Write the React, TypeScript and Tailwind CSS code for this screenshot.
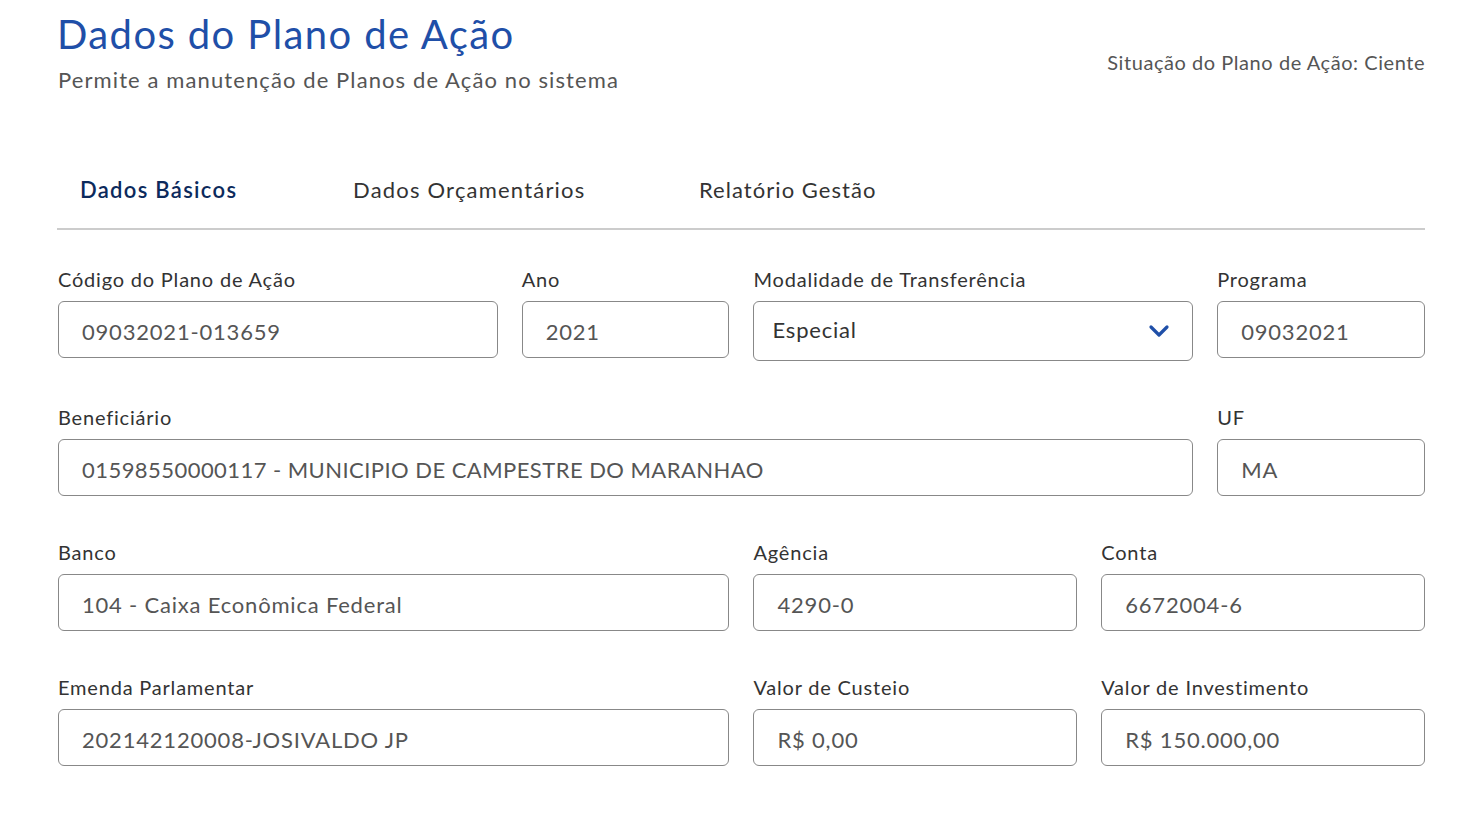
import React from "react";

const font = { fontFamily: "Lato, 'Open Sans', sans-serif" };

function Field({
  label,
  value,
  span,
  tracking = "tracking-[0.8px]",
}: {
  label: string;
  value: string;
  span: string;
  tracking?: string;
}) {
  return (
    <div className={`${span} flex flex-col`}>
      <label className="text-[20px] leading-[24px] tracking-[0.8px] text-[#333333] mb-[10px]">{label}</label>
      <div className={`h-[57px] rounded-[6px] border border-[#888888] flex items-center pl-[23px] pt-[3px] text-[22px] ${tracking} text-[#555555]`}>
        {value}
      </div>
    </div>
  );
}

export default function App() {
  return (
    <div className="min-h-screen bg-white" style={font}>
      <div className="ml-[58px] w-[1367px]">
        <div className="flex justify-between items-start">
          <div>
            <h1 className="text-[40px] leading-[48px] tracking-[1.4px] text-[#1f4fa8] pt-[10px] -ml-[1px]">Dados do Plano de Ação</h1>
            <p className="text-[22px] leading-[28px] tracking-[1.1px] text-[#555555] mt-[8px]">Permite a manutenção de Planos de Ação no sistema</p>
          </div>
          <div className="text-[20px] tracking-[0.55px] text-[#555555] mt-[47px]">Situação do Plano de Ação: Ciente</div>
        </div>

        <div className="mt-[78px] border-b-2 border-[#cccccc] flex h-[58px] items-start -ml-px pt-[1px]">
          <div className="ml-[23px] w-[273px] text-[22px] tracking-[1.3px] font-semibold text-[#0c2a5c]">Dados Básicos</div>
          <div className="w-[346px] text-[22px] tracking-[1.2px] text-[#333333]">Dados Orçamentários</div>
          <div className="text-[22px] tracking-[1.05px] text-[#333333]">Relatório Gestão</div>
        </div>

        <div className="grid grid-cols-12 gap-x-6 gap-y-[44px] mt-[37px]">
          <Field span="col-span-4" label="Código do Plano de Ação" value="09032021-013659" />
          <Field span="col-span-2" label="Ano" value="2021" />
          <div className="col-span-4 flex flex-col">
            <label className="text-[20px] leading-[24px] tracking-[0.8px] text-[#333333] mb-[10px]">Modalidade de Transferência</label>
            <div className="h-[60px] rounded-[6px] border border-[#888888] flex items-center justify-between pl-[18px] pr-[22px] text-[22px] tracking-[0.8px] text-[#333333]">
              <span className="-mt-[4px]">Especial</span>
              <svg width="22" height="14" viewBox="0 0 22 14" fill="none">
                <path d="M3 3l8 8 8-8" stroke="#1f4fa8" strokeWidth="3.2" strokeLinecap="round" strokeLinejoin="round" />
              </svg>
            </div>
          </div>
          <Field span="col-span-2" label="Programa" value="09032021" />

          <Field span="col-span-10" label="Beneficiário" value="01598550000117 - MUNICIPIO DE CAMPESTRE DO MARANHAO" tracking="tracking-[0.45px]" />
          <Field span="col-span-2" label="UF" value="MA" />

          <Field span="col-span-6" label="Banco" value="104 - Caixa Econômica Federal" />
          <Field span="col-span-3" label="Agência" value="4290-0" />
          <Field span="col-span-3" label="Conta" value="6672004-6" />

          <Field span="col-span-6" label="Emenda Parlamentar" value="202142120008-JOSIVALDO JP" />
          <Field span="col-span-3" label="Valor de Custeio" value="R$ 0,00" />
          <Field span="col-span-3" label="Valor de Investimento" value="R$ 150.000,00" />
        </div>
      </div>
    </div>
  );
}
